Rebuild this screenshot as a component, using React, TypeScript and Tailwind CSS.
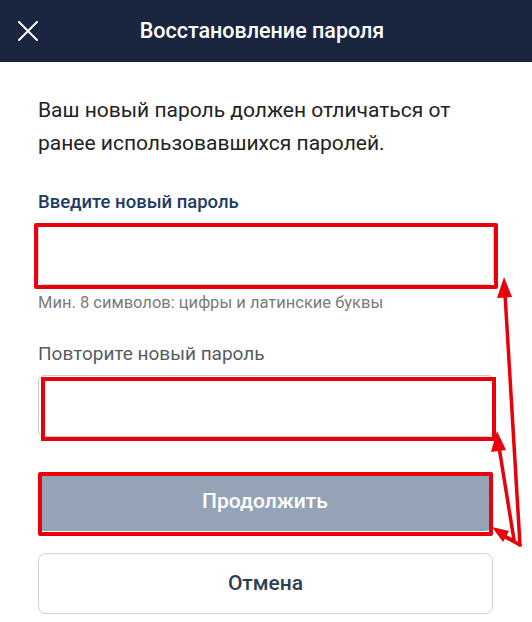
import React from "react";

export default function App() {
  return (
    <div
      className="relative w-[532px] h-[622px] bg-white overflow-hidden"
      style={{ fontFamily: "Roboto, 'Noto Sans', sans-serif" }}
    >
      <header className="h-[62px] bg-[#1a2540] flex items-center px-[18px]">
        <svg width="20" height="20" viewBox="0 0 20 20" className="shrink-0">
          <path d="M1 1 L19 19 M19 1 L1 19" stroke="#fff" strokeWidth="2" strokeLinecap="round" />
        </svg>
        <h1 className="flex-1 text-center text-white text-[21.5px] font-medium pr-[8px]">
          Восстановление пароля
        </h1>
        <div className="w-5 shrink-0" />
      </header>

      <main className="px-[38px] flex flex-col">
        <p className="mt-[32px] w-[456px] text-[21px] leading-[33px] text-[#222]">
          Ваш новый пароль должен отличаться от ранее использовавшихся паролей.
        </p>

        <label className="mt-[30px] text-[18.5px] leading-[24px] font-medium text-[#1f3b66]">
          Введите новый пароль
        </label>
        <div className="mt-[9px] h-[62px] w-[456px] rounded-md border border-[#c9cdd3] bg-white" />
        <p className="mt-[7px] text-[16.5px] leading-[22px] text-[#7a7a7a]">
          Мин. 8 символов: цифры и латинские буквы
        </p>

        <label className="mt-[28px] text-[19px] leading-[24px] text-[#555b63]">
          Повторите новый пароль
        </label>
        <div className="mt-[9px] h-[62px] w-[456px] rounded-md border border-[#c9cdd3] bg-white" />

        <button className="mt-[36px] h-[58px] w-[454px] rounded-md bg-[#94a3b6] text-white text-[21px] font-medium">
          Продолжить
        </button>
        <button className="mt-[22px] h-[61px] w-[455px] rounded-lg border border-[#cfd3d8] bg-white text-[#2d3e55] text-[21px] font-medium">
          Отмена
        </button>
      </main>

      {/* red annotation overlays */}
      <div className="absolute left-[34px] top-[223px] w-[464px] h-[66px] border-[4px] border-[#e8000b] rounded-[2px]" />
      <div className="absolute left-[41px] top-[377px] w-[455px] h-[64px] border-[4px] border-[#e8000b]" />
      <div className="absolute left-[38px] top-[472px] w-[455px] h-[64px] border-[4px] border-[#e8000b] rounded-[2px]" />

      <svg
        className="absolute inset-0 pointer-events-none"
        width="532"
        height="622"
        viewBox="0 0 532 622"
      >
        <g stroke="#e8000b" strokeWidth="3.5" fill="none" strokeLinecap="round">
          <line x1="520" y1="545" x2="505" y2="294" />
          <line x1="514" y1="540" x2="499" y2="447" />
          <line x1="520" y1="545" x2="502" y2="535" />
          <line x1="512" y1="540" x2="504" y2="536" />
        </g>
        <g fill="#e8000b">
          <polygon points="504,277 497,298 512,297" />
          <polygon points="497,431 491,452 506,450" />
          <polygon points="492,527 503,542 509,531" />
        </g>
      </svg>
    </div>
  );
}
